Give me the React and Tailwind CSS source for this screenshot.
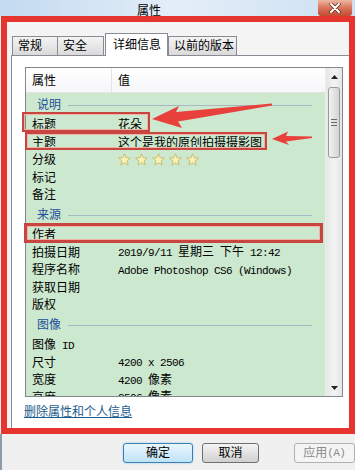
import React from 'react';

const M = ({ children }) => (
  <span className="font-['Liberation_Mono',monospace] text-[11px] tracking-[-0.6px]">{children}</span>
);

function Star() {
  return (
    <svg width="13" height="13" viewBox="0 0 24 24">
      <polygon
        points="12,1.5 15,8.6 22.8,9.3 16.9,14.5 18.7,22.2 12,18.2 5.3,22.2 7.1,14.5 1.2,9.3 9,8.6"
        fill="#f7f1b5"
        stroke="#c8b66a"
        strokeWidth="1.6"
        strokeLinejoin="round"
      />
    </svg>
  );
}

function Group({ label }) {
  return (
    <div className="h-[22.5px] flex items-center pt-[2px] pl-[11px] pr-[13px]">
      <span className="text-[#1f4f99]">{label}</span>
      <div className="ml-[7px] flex-1 h-px bg-[#a9b8c4]" />
    </div>
  );
}

function Row({ name, children }) {
  return (
    <div className="h-[17.5px] flex items-center pt-[2px]">
      <div className="w-[86px] pl-[6px] whitespace-pre">{name}</div>
      <div className="pl-[6px] whitespace-pre">{children}</div>
    </div>
  );
}

function Tab({ w, children }) {
  return (
    <div className={`${w} h-[19px] border border-b-0 border-[#898c95] bg-gradient-to-b from-[#f4f4f4] to-[#dadada] pl-[5px] flex items-center`}>
      {children}
    </div>
  );
}

export default function App() {
  return (
    <div className="relative w-[355px] h-[470px] overflow-hidden bg-[#f0f0f0] text-[12px] leading-none text-black font-['Liberation_Sans','Noto_Sans_CJK_SC',sans-serif]">
      {/* title bar */}
      <div className="h-[16px] flex bg-gradient-to-r from-[#c3daf0] via-[#e4eef8] to-[#cde0f2]">
        <div className="flex-1 pl-[137px] pt-[5px]">属性</div>
        <div className="w-[34px] mr-[3px] h-[16px] rounded-b-[3px] bg-gradient-to-b from-[#edb7a2] via-[#d8735a] to-[#c04a30] flex items-center justify-center">
          <svg width="12" height="10" viewBox="0 0 12 10">
            <path d="M2 1 L10 9 M10 1 L2 9" stroke="#5a2a20" strokeWidth="3.4" strokeLinecap="round" />
            <path d="M2 1 L10 9 M10 1 L2 9" stroke="#fff" strokeWidth="2" strokeLinecap="round" />
          </svg>
        </div>
      </div>

      {/* red frame */}
      <div className="ml-[1px] h-[418px] border-[6px] border-[#e6352f] bg-[#f4f4f4] flex flex-col">
        <div className="mt-[11px] pl-[5px] flex items-end h-[22px]">
          <Tab w="w-[46px]">常规</Tab>
          <div className="-ml-px">
            <Tab w="w-[47px]">安全</Tab>
          </div>
          <div className="relative z-10 ml-px -mb-px w-[63px] h-[23px] border border-b-0 border-[#898c95] bg-white pl-[7px] flex items-center">
            详细信息
          </div>
          <Tab w="w-[69px]">以前的版本</Tab>
        </div>

        <div className="flex-1 ml-[4px] border-t border-l border-[#898c95] bg-white">
          <div className="mt-[11px] ml-[13px] w-[318px] h-[330px] border border-[#828790] flex">
            <div className="w-[299px] flex flex-col">
              <div className="h-[25px] flex items-stretch bg-gradient-to-b from-white to-[#f5f6f8] border-b border-[#e3e4e6]">
                <div className="w-[86px] pl-[6px] pt-[2px] border-r border-[#e3e4e6] flex items-center">属性</div>
                <div className="pl-[6px] pt-[2px] flex items-center">值</div>
              </div>
              <div className="flex-1 bg-[#cce8cf] overflow-hidden">
                <Group label="说明" />
                <Row name="标题">花朵</Row>
                <Row name="主题">这个是我的原创拍摄摄影图</Row>
                <Row name="分级">
                  <div className="flex gap-[4px] -mt-[2px]">
                    <Star />
                    <Star />
                    <Star />
                    <Star />
                    <Star />
                  </div>
                </Row>
                <Row name="标记" />
                <Row name="备注" />
                <Group label="来源" />
                <Row name="作者" />
                <Row name="拍摄日期">
                  <M>2019/9/11 </M>星期三<M> </M>下午<M> 12:42</M>
                </Row>
                <Row name="程序名称">
                  <M>Adobe Photoshop CS6 (Windows)</M>
                </Row>
                <Row name="获取日期" />
                <Row name="版权" />
                <Group label="图像" />
                <Row
                  name={
                    <>
                      图像<M> ID</M>
                    </>
                  }
                />
                <Row name="尺寸">
                  <M>4200 x 2506</M>
                </Row>
                <Row name="宽度">
                  <M>4200 </M>像素
                </Row>
                <Row name="高度">
                  <M>2506 </M>像素
                </Row>
              </div>
            </div>

            {/* scrollbar */}
            <div className="w-[17px] flex flex-col bg-gradient-to-r from-[#e6e6e6] via-[#f3f3f3] to-[#e6e6e6] border-l border-[#eeeeee]">
              <div className="h-[17px] flex items-center justify-center">
                <svg width="7" height="4" viewBox="0 0 7 4">
                  <polygon points="3.5,0 7,4 0,4" fill="#222" />
                </svg>
              </div>
              <div className="mt-[2px] mx-[2px] h-[71px] rounded-[3px] border border-[#9a9a9a] bg-gradient-to-r from-[#f2f2f2] to-[#d4d4d4] flex flex-col items-center justify-center gap-[2px]">
                <div className="w-[6px] h-px bg-[#6a6a6a]" />
                <div className="w-[6px] h-px bg-[#6a6a6a]" />
                <div className="w-[6px] h-px bg-[#6a6a6a]" />
              </div>
              <div className="flex-1" />
              <div className="h-[17px] flex items-center justify-center">
                <svg width="7" height="4" viewBox="0 0 7 4">
                  <polygon points="0,0 7,0 3.5,4" fill="#222" />
                </svg>
              </div>
            </div>
          </div>

          <div className="mt-[9px] ml-[12px] text-[#1b5c8e] underline">删除属性和个人信息</div>
        </div>
      </div>

      {/* buttons */}
      <div className="h-[36px] flex items-start pt-[9px] pl-[121px] border-l-2 border-[#8e9aa6]">
        <div className="w-[71px] h-[20px] rounded-[3px] border border-[#3c7fb1] bg-gradient-to-b from-[#eaf6fd] to-[#bfe3f7] shadow-[0_0_2px_#7ec6ec] flex items-center justify-center">
          确定
        </div>
        <div className="ml-[9px] w-[57px] h-[20px] rounded-[3px] border border-[#707070] bg-gradient-to-b from-[#f4f4f4] to-[#d0d0d0] flex items-center justify-center">
          取消
        </div>
        <div className="ml-[35px] w-[62px] h-[20px] rounded-[3px] border border-[#adb2b5] bg-[#f4f4f4] text-[#8a8a8a] flex items-center justify-center whitespace-pre">
          应用<M>(A)</M>
        </div>
      </div>

      {/* annotations */}
      <div className="absolute inset-0 pointer-events-none">
        <div className="absolute left-[22px] top-[112px] w-[128px] h-[20px] border-[2px] border-[#c8463f] shadow-[inset_0_0_0_1px_#eeb4a6]" />
        <div className="absolute left-[25px] top-[132px] w-[242px] h-[18px] border-[2px] border-[#c8463f] shadow-[inset_0_0_0_1px_#eeb4a6]" />
        <div className="absolute left-[24px] top-[223px] w-[299px] h-[20px] border-[3px] border-[#c8463f] shadow-[inset_0_0_0_1px_#eeb4a6]" />
        <svg className="absolute left-0 top-0" width="355" height="470" viewBox="0 0 355 470">
          <polygon
            points="152,119 179,106 176,112 272,103.5 272,105.5 178,121.5 182,128"
            fill="#e8403a"
          />
          <polygon points="272,139 288,131.5 286,136 312,136.5 312,138 286,141.5 289,145" fill="#e8403a" />
        </svg>
      </div>
    </div>
  );
}
